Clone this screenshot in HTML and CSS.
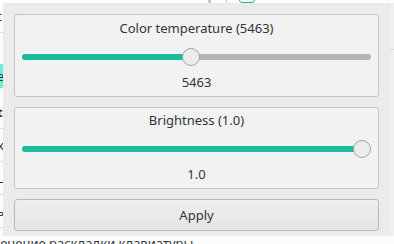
FILE: index.html
```html
<!DOCTYPE html>
<html lang="ru">
<head>
<meta charset="UTF-8">
<meta name="viewport" content="width=device-width, initial-scale=1.0">
<title>Night color</title>
<link rel="stylesheet" href="styles.css">
</head>
<body>
<div class="page">
  <ul class="side-list">
    <li class="row"><span>t</span></li>
    <li class="row no-line"><span></span></li>
    <li class="row selected"><span>e</span></li>
    <li class="row bold"><span>t</span></li>
    <li class="row"><span>x</span></li>
    <li class="row"><span>L</span></li>
    <li class="row"><span>ы</span></li>
  </ul>
  <div class="page-footer">Изменение раскладки клавиатуры</div>
  <div class="top-strip">
    <span class="sep"></span>
    <span class="sep second"></span>
    <span class="toggle"></span>
  </div>
  <div class="right-strip"></div>
</div>

<div class="popup">
  <div class="card">
    <div class="card-title">Color temperature (5463)</div>
    <div class="slider" style="--v: 0.483">
      <div class="track"><div class="fill"></div></div>
      <div class="handle"></div>
    </div>
    <div class="card-value">5463</div>
  </div>

  <div class="card">
    <div class="card-title">Brightness (1.0)</div>
    <div class="slider" style="--v: 1">
      <div class="track"><div class="fill"></div></div>
      <div class="handle"></div>
    </div>
    <div class="card-value">1.0</div>
  </div>

  <button class="apply">Apply</button>
</div>
</body>
</html>
```

FILE: styles.css
```css
html {
  overflow: hidden;
}

body {
  font-family: "Noto Sans", "DejaVu Sans", sans-serif;
  font-size: 13px;
  color: #31363b;
  background-color: #fcfcfc;
  margin: 0;
  width: 394px;
  height: 244px;
  overflow: hidden;
}

/* фон за всплывающим окном */
.page {
  position: relative;
  width: 394px;
  height: 244px;
  overflow: hidden;
}

.side-list {
  list-style-type: none;
  margin: 0;
  padding: 0;
  width: 205px;
}

.row {
  height: 32px;
  border-bottom: 1px solid #e0e0e0;
  display: flex;
  align-items: center;
  overflow: hidden;
}

.row span {
  margin-left: -3px;
}

.row.no-line {
  height: 31px;
  border-bottom: none;
}

.row.selected {
  height: 24px;
  background-color: #66f2d6;
  border-bottom: none;
}

.row.bold {
  margin-top: 8px;
  font-weight: bold;
}

.page-footer {
  margin-top: 6px;
  margin-left: -26px;
  white-space: nowrap;
  line-height: 18px;
}

.top-strip {
  position: absolute;
  left: 0;
  top: 0;
  width: 394px;
  height: 3px;
}

.sep {
  position: absolute;
  left: 208px;
  top: 0;
  width: 3px;
  height: 3px;
  background-color: #c8c8c8;
}

.sep.second {
  left: 226px;
  width: 1px;
}

.toggle {
  position: absolute;
  left: 239px;
  top: -10px;
  width: 14px;
  height: 11px;
  border: 1px solid #1abc9c;
  border-radius: 3px;
}

.right-strip {
  position: absolute;
  right: 0;
  top: 3px;
  width: 4px;
  height: 233px;
  background-color: #efefef;
  box-shadow: inset 0 -186px 0 #efefef, inset 0 -187px 0 #dcdcdc;
}

/* всплывающее окно */
.popup {
  position: absolute;
  left: 3px;
  top: 3px;
  width: 387px;
  height: 233px;
  box-sizing: border-box;
  padding: 11px 11px 0;
  background-color: #ebebeb;
  display: flex;
  flex-direction: column;
  gap: 10px;
}

.card {
  height: 83px;
  box-sizing: border-box;
  padding: 4px 7px 0;
  background-color: #f2f2f2;
  border: 1px solid #c4c4c4;
  border-radius: 3px;
}

.card + .card {
  height: 82px;
  padding-top: 3px;
}

.card-title,
.card-value {
  height: 18px;
  line-height: 18px;
  text-align: center;
}

.card-value {
  margin-top: 6px;
}

.slider {
  position: relative;
  height: 20px;
  margin-top: 10px;
  display: flex;
  align-items: center;
}

.track {
  flex-grow: 1;
  height: 6px;
  border-radius: 3px;
  background-color: #b5b5b5;
  overflow: hidden;
}

.fill {
  height: 100%;
  width: calc(9px + (100% - 18px) * var(--v));
  background-color: #1abc9c;
}

.handle {
  position: absolute;
  top: 1px;
  left: calc((100% - 18px) * var(--v));
  width: 18px;
  height: 18px;
  box-sizing: border-box;
  border-radius: 50%;
  border: 1px solid #a6a6a6;
  background-color: #ececec;
}

.apply {
  height: 32px;
  padding: 0;
  font-family: inherit;
  font-size: 13px;
  color: #31363b;
  border: 1px solid #b9b9b9;
  border-radius: 3px;
  background: linear-gradient(#efefef, #e4e4e4);
  cursor: pointer;
}
```
